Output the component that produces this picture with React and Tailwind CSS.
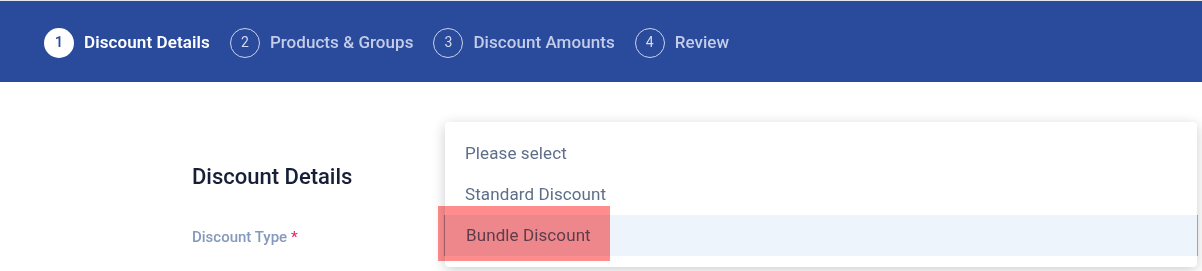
import React from "react";

const steps = [
    { n: 1, title: "Discount Details", active: true },
    { n: 2, title: "Products & Groups" },
    { n: 3, title: "Discount Amounts" },
    { n: 4, title: "Review" },
];

const options = ["Please select", "Standard Discount", "Bundle Discount"];

const Step = ({ n, title, active }) => {
    return (
        <li className="flex items-center gap-[10px]">
            {active ? (
                <span className="flex h-[30px] w-[30px] items-center justify-center rounded-full bg-white text-[14px] font-semibold text-[#2a4a9b]">
                    {n}
                </span>
            ) : (
                <span className="flex h-[30px] w-[30px] items-center justify-center rounded-full border-[1.5px] border-[#c9d2ec] text-[14px] text-[#d3daf0]">
                    {n}
                </span>
            )}
            <span className={active ? "text-[17px] font-semibold tracking-[0.1px] text-white" : "text-[17px] font-medium tracking-[0.05px] text-[#c3cce8]"}>
                {title}
            </span>
        </li>
    );
};

const App = () => {
    return (
        <div className="relative h-[271px] w-full overflow-hidden border-t border-[#e3e6ea] bg-white font-['Roboto',sans-serif]">
            {/* Stepper */}
            <header className="flex h-[81px] items-center bg-[#2a4a9b] pl-[44px] pt-[2px]">
                <ul className="flex items-center gap-[20px]">
                    {steps.map((s) => (
                        <Step key={s.n} {...s} />
                    ))}
                </ul>
            </header>

            {/* Form */}
            <div className="pl-[192px] pt-[80px]">
                <h2 className="text-[22px] font-medium leading-[30px] text-[#161f36]">Discount Details</h2>
                <label className="mt-[35px] block text-[15px] font-medium leading-[20px] text-[#8499bb]">
                    Discount Type <span className="text-[#e0356b]">*</span>
                </label>
            </div>

            {/* Dropdown menu */}
            <div className="absolute left-[445px] top-[121px] w-[752px] rounded-[4px] bg-white py-[11px] shadow-[0_3px_14px_rgba(0,0,0,0.2)]">
                {options.map((o, i) => (
                    <div
                        key={o}
                        className={
                            i === 2
                                ? "-mx-px flex h-[41px] items-center border-x border-[#9aa6b8] bg-[#eef4fb] pl-[21px] text-[17px] tracking-[0.1px] text-[#5e6e88]"
                                : "flex h-[41px] items-center pl-[20px] text-[17px] tracking-[0.1px] text-[#5e6e88]"
                        }
                    >
                        {o}
                    </div>
                ))}
            </div>

            {/* highlight marker */}
            <div className="absolute left-[438px] top-[205px] h-[55px] w-[172px] bg-[#ff8d8d] mix-blend-multiply" />
        </div>
    );
};

export default App;
